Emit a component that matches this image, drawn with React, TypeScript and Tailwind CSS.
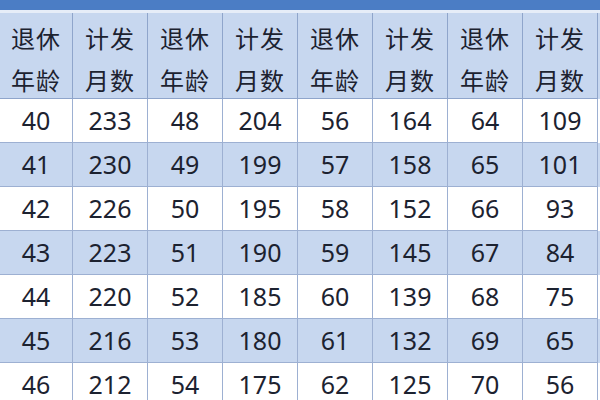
const rows: number[][] = [
  [40, 233, 48, 204, 56, 164, 64, 109],
  [41, 230, 49, 199, 57, 158, 65, 101],
  [42, 226, 50, 195, 58, 152, 66, 93],
  [43, 223, 51, 190, 59, 145, 67, 84],
  [44, 220, 52, 185, 60, 139, 68, 75],
  [45, 216, 53, 180, 61, 132, 69, 65],
  [46, 212, 54, 175, 62, 125, 70, 56],
];

const head = [
  ['退休', '年龄'],
  ['计发', '月数'],
  ['退休', '年龄'],
  ['计发', '月数'],
  ['退休', '年龄'],
  ['计发', '月数'],
  ['退休', '年龄'],
  ['计发', '月数'],
];

const grid = 'grid grid-cols-[73px_repeat(7,75px)]';

export default function App() {
  return (
    <div className="w-[600px] h-[400px] overflow-hidden bg-white text-[#1c2230] font-['Noto_Sans_CJK_SC','Noto_Sans',sans-serif]">
      <div className="h-[10px] bg-[#4b7dc5]" />
      <div className="h-[3px] bg-[#e6edf8]" />
      <div className={`${grid} bg-[#c7d7ef]`}>
        {head.map((h, i) => (
          <div key={i} className="h-[86px] border-r-[1.5px] border-b-[1.5px] border-[#8fa5cb] flex flex-col items-center justify-center pt-[6px] text-[24px] leading-[42px] tracking-[1px]">
            <span>{h[0]}</span>
            <span>{h[1]}</span>
          </div>
        ))}
      </div>
      {rows.map((r, ri) => (
        <div key={ri} className={`${grid} ${ri % 2 === 1 ? 'bg-[#c7d7ef]' : 'bg-white'}`}>
          {r.map((v, ci) => (
            <div key={ci} className="h-[44px] border-r-[1.5px] border-b-[1.5px] border-[#9db0d2] flex items-center justify-center font-['Noto_Sans',sans-serif] text-[25px]">
              {v}
            </div>
          ))}
        </div>
      ))}
    </div>
  );
}
